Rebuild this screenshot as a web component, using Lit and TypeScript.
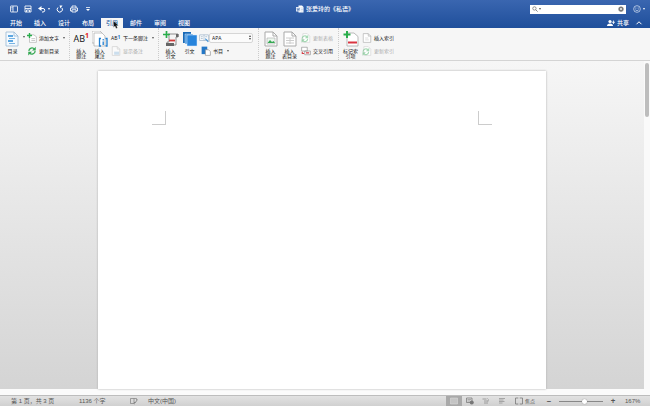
import { LitElement, html, css, svg, nothing } from "lit";
import { customElement, property, state } from "lit/decorators.js";
import { classMap } from "lit/directives/class-map.js";

const paper = svg`<path d="M2 1h8l4 4v10H2z" fill="#fff" stroke="#a9a9a9"/><path d="M10 1v4h4" fill="none" stroke="#a9a9a9"/>`;
const cycle = (c: string) => svg`<path d="M3 8a5 5 0 0 1 9-3M13 8a5 5 0 0 1-9 3" fill="none" stroke=${c} stroke-width="2"/><path d="M14 1v6H8zM2 15V9h6z" fill=${c}/>`;

const icons: Record<string, unknown> = {
  layout: svg`<rect x="1" y="2" width="14" height="12" rx="1" fill="none" stroke="#fff" stroke-width="1.6"/><path d="M6 2v12M3 5h2M3 8h2" stroke="#fff" stroke-width="1.6"/>`,
  save: svg`<path d="M2 2h12v12H2zM2 7h12M5 14v-4h6v4" fill="none" stroke="#fff" stroke-width="1.700"/>`,
  undo: svg`<path d="M3 7h7a3.500 3.500 0 0 1 0 7H8" fill="none" stroke="#fff" stroke-width="2"/><path d="M7 2L0 7l7 5z" fill="#fff"/>`,
  redo: svg`<path d="M4 5a5.300 5.300 0 1 0 8 1" fill="none" stroke="#fff" stroke-width="2"/><path d="M7 1h6L9 7z" fill="#fff"/>`,
  print: svg`<path d="M4 6V2h8v4M4 12H1V6h14v6h-3M4 9.500h8V14H4z" fill="none" stroke="#fff" stroke-width="1.700"/>`,
  more: svg`<path d="M4 5h8" stroke="#fff" stroke-width="1.500"/><path d="M4 8h8l-4 4z" fill="#fff"/>`,
  word: svg`<path d="M5 1h7l3 3v11H5z" fill="#fff"/><path d="M0 4h9v9H0z" fill="#dfe8f6"/><path d="M2 6l1.200 5L4.500 7l1.300 4L7 6" fill="none" stroke="#2b579a"/><path d="M10 6h4M10 9h4M10 12h4" stroke="#9db4d8"/>`,
  search: svg`<circle cx="6.500" cy="6.500" r="4.500" fill="none" stroke="#555" stroke-width="1.600"/><path d="M10 10l5 5" stroke="#555" stroke-width="1.800"/>`,
  clear: svg`<circle cx="8" cy="8" r="7" fill="#777"/><path d="M5 5l6 6M11 5l-6 6" stroke="#fff" stroke-width="1.800"/>`,
  smile: svg`<circle cx="8" cy="8" r="6.700" fill="none" stroke="#dce6f5" stroke-width="1.400"/><path d="M4.500 9.500q3.500 4 7 0" fill="none" stroke="#dce6f5" stroke-width="1.300"/><circle cx="5.700" cy="6" r="1.100" fill="#dce6f5"/><circle cx="10.300" cy="6" r="1.100" fill="#dce6f5"/>`,
  share: svg`<circle cx="6" cy="5" r="3.200" fill="#fff"/><path d="M0 14q0-5 6-5t6 5z" fill="#fff"/><path d="M13 3v7M9.500 6.500h6.500" stroke="#fff" stroke-width="1.600"/>`,
  chevron: svg`<path d="M3 10.500l5-5 5 5" fill="none" stroke="#fff" stroke-width="2"/>`,
  toc: svg`<path d="M2 1h8l4 4v10H2z" fill="#f3f9fe" stroke="#9ab9d4" stroke-width=".8"/><path d="M4 5h5M4 10h5" stroke="#2b8ad8" stroke-width="1.500"/><path d="M5 7.500h6M5 12.500h6" stroke="#78b4e4"/><path d="M10 1v4h4" fill="none" stroke="#9ab9d4" stroke-width=".8"/>`,
  addText: svg`<path d="M4 3h7l4 3v9H4z" fill="#fff" stroke="#aaa"/><path d="M7 9h6M7 12h6" stroke="#aaa"/><path d="M4 0v8M0 4h8" stroke="#29ad4b" stroke-width="2.200"/>`,
  update: cycle("#35a853"),
  updateOff: svg`<path d="M3 1h7l4 4v10H3z" fill="#fff" stroke="#d2d2d2"/><g opacity=".5" transform="translate(-1 2) scale(.9)">${cycle("#4fb56b")}</g>`,
  endnote: svg`<path d="M0 0h8l2 2v10H0z" fill="#fff" stroke="#aaa" stroke-width=".7"/><path d="M2 2h8l3 3v10H2z" fill="#fff" stroke="#aaa" stroke-width=".7"/><path d="M9 7.500H7.500V15H9M13.500 7.500H15V15h-1.500M11.200 10.500V14" fill="none" stroke="#2380d2" stroke-width="1.300"/><circle cx="11.200" cy="8.800" r=".8" fill="#2380d2"/>`,
  showNotes: svg`<g opacity=".55">${paper}<path d="M5 9h8v5H5z" fill="#a9cbe7"/></g>`,
  insertCitation: svg`<path d="M5 3h10v3h-2v8H4v-3h2V5z" fill="#f4f4f4" stroke="#777" stroke-width=".8"/><path d="M3 12h8v3H3z" fill="#666"/><path d="M13 3h2.500v3H13z" fill="#666"/><path d="M6 9.500h6" stroke="#d23a3a" stroke-width="1.800"/><path d="M3.500 0v7M0 3.500h7" stroke="#29ad4b" stroke-width="1.700"/>`,
  books: svg`<path d="M1 1h8v11H1z" fill="#1769b8"/><path d="M3 3h8v10H3z" fill="#4595dd" stroke="#fff" stroke-width=".4"/><path d="M5 4h10v11H5z" fill="#2784dc" stroke="#d8ebfc" stroke-width=".5"/>`,
  style: svg`<path d="M1 3h14v9H1zM8 3v9" fill="#fff" stroke="#8fa9c2"/><path d="M3 6h3M3 9h3M10 6h3" stroke="#7f9cb6"/><path d="M10 9l5 5" stroke="#4b97d7" stroke-width="2"/>`,
  bib: svg`<path d="M1 1h9v12H1z" fill="#2377c7"/><path d="M7 6h5l3 3v6H7z" fill="#fff" stroke="#888"/>`,
  caption: svg`${paper}<path d="M4 7h8v6H4z" fill="#edf7ef" stroke="#aaa" stroke-width=".6"/><path d="M4.500 12l2.500-3 2 2 1.500-1 1.500 2z" fill="#35a853"/>`,
  tableFig: svg`${paper}<path d="M4 7h8M4 9.500h8M4 12h8M8 7v6" stroke="#ccc"/>`,
  crossRef: svg`<path d="M1 2h9v6H1zM6 8h9v6H6z" fill="#fff" stroke="#888"/><path d="M2 9v3h3M8 11h5" fill="none" stroke="#d33d46" stroke-width="1.700"/>`,
  markEntry: svg`<path d="M4 2h7l4 3.500V15H4z" fill="#fff" stroke="#aaa" stroke-width=".8"/><path d="M5 11.500h9" stroke="#d93440" stroke-width="2"/><path d="M4 0v7M.5 3.500h7" stroke="#29ad4b" stroke-width="2"/>`,
  index: svg`${paper}<path d="M5 8h5M5 11h6" stroke="#ccc"/>`,
  proof: svg`<path d="M8 3H1v10h7l2 1M8 3v10M8 3h5v3" fill="none" stroke="#777" stroke-width="1.300"/><path d="M8 10l2 2 5-7" fill="none" stroke="#777" stroke-width="1.600"/>`,
  printView: svg`<path d="M1 2h14v12H1z" fill="#c4c4c4" stroke="#dedede"/>`,
  webView: svg`<path d="M1 2h11v9H1z" fill="none" stroke="#777" stroke-width="1.500"/><path d="M3 5h7M3 8h5" stroke="#777"/><circle cx="11.500" cy="11" r="4" fill="#777"/>`,
  outline: svg`<path d="M1 4h8M4 8h9M4 12h8" stroke="#888" stroke-width="1.500"/><path d="M10 2l4 4-4 3" fill="none" stroke="#999"/>`,
  draft: svg`<path d="M2 3h12M2 6h9M2 9h11M2 12h7" stroke="#888" stroke-width="1.300"/>`,
  focus: svg`<path d="M6 2H1v12h5M10 2h5v12h-5" fill="none" stroke="#777" stroke-width="1.600"/><path d="M6 2h4M6 14h4" stroke="#aaa"/>`,
};

const icon = (name: string, size = "s") =>
  html`<svg class="icon ${size}" viewBox="0 0 16 16" aria-hidden="true">${icons[name]}</svg>`;
const caret = html`<span class="caret"></span>`;

interface Command { icon: string; label: string; menu?: boolean; off?: boolean }

@customElement("ribbon-bar")
class RibbonBar extends LitElement {
  static styles = css`
    :host { display: flex; height: 32px; background: #f6f6f6; border-bottom: 1px solid #d4d4d4; overflow: hidden; }
    .group { display: flex; flex: none; align-items: flex-start; padding: 3px 4px 0 2px; border-left: 1px dotted #ccc; box-sizing: border-box; }
    .g1 { width: 69px; border-left: 0; padding-left: 4px; }
    .g2 { width: 89px; }
    .g3 { width: 100px; }
    .g4 { width: 80px; }
    button { border: 0; background: none; padding: 0; margin: 0; font: inherit; color: #111; white-space: nowrap; }
    .big { display: flex; flex-direction: column; align-items: center; width: 19px; line-height: 5px; text-align: center; }
    .label { display: flex; flex-direction: column; height: 11px; margin-top: 2px; }
    .col { display: flex; flex-direction: column; gap: 3px; margin-left: 2px; padding-top: 2px; }
    .row { display: flex; align-items: center; gap: 2px; height: 10px; }
    .tight { gap: 0; margin-left: -2px; }
    .off { color: #aaa; }
    .icon { display: block; flex: none; }
    .s { width: 10px; height: 10px; }
    .l { width: 16px; height: 16px; }
    .caret { border: 1px solid transparent; border-top: 2px solid #555; border-bottom: 0; margin-left: 2px; }
    .open { padding-top: 7px; width: 4px; }
    .ab { display: flex; height: 16px; align-items: center; font: 9px/16px "Open Sans", sans-serif; }
    .ab sup { font-size: 7px; line-height: 10px; align-self: flex-start; color: #e01b24; font-weight: 700; }
    .mini { display: flex; width: 10px; font: 5px/10px "Open Sans", sans-serif; }
    .mini sup { font-size: 5px; line-height: 8px; color: #1976c9; font-weight: 700; }
    .pick { position: relative; display: flex; }
    select { appearance: none; width: 44px; height: 10px; padding: 0 2px; border: 1px solid #d6d6d6; border-radius: 2px; background: #fbfbfb; color: #111; font: 5px/8px "Open Sans", sans-serif; }
    .arrows { position: absolute; right: 2px; top: 2px; display: grid; gap: 1px; }
    .arrows::before { content: ""; border: 1px solid transparent; border-bottom: 2px solid #444; border-top: 0; }
    .arrows::after { content: ""; border: 1px solid transparent; border-top: 2px solid #444; border-bottom: 0; }
  `;

  big(name: string, lines: string[]) {
    const art = name === "ab" ? html`<span class="ab">AB<sup>1</sup></span>` : icon(name, "l");
    return html`<button class="big">${art}<span class="label">${lines.map((t) => html`<span>${t}</span>`)}</span></button>`;
  }

  row(c: Command) {
    const art = c.icon === "ab" ? html`<span class="mini">AB<sup>1</sup></span>` : icon(c.icon);
    return html`<button class=${classMap({ row: true, off: !!c.off })} ?disabled=${c.off}>${art}<span>${c.label}</span>${c.menu ? caret : nothing}</button>`;
  }

  render() {
    return html`
      <div class="group g1">
        ${this.big("toc", ["目录"])}
        <button class="open" aria-label="目录"><span class="caret"></span></button>
        <div class="col">
          ${this.row({ icon: "addText", label: "添加文字", menu: true })}
          ${this.row({ icon: "update", label: "更新目录" })}
        </div>
      </div>
      <div class="group g2">
        ${this.big("ab", ["插入", "脚注"])} ${this.big("endnote", ["插入", "尾注"])}
        <div class="col">
          ${this.row({ icon: "ab", label: "下一条脚注", menu: true })}
          ${this.row({ icon: "showNotes", label: "显示备注", off: true })}
        </div>
      </div>
      <div class="group g3">
        ${this.big("insertCitation", ["插入", "引文"])} ${this.big("books", ["引文"])}
        <div class="col">
          <label class="row tight">${icon("style")}<span class="pick"><select aria-label="APA"><option>APA</option></select><span class="arrows"></span></span></label>
          ${this.row({ icon: "bib", label: "书目", menu: true })}
        </div>
      </div>
      <div class="group g4">
        ${this.big("caption", ["插入", "题注"])} ${this.big("tableFig", ["插入", "表目录"])}
        <div class="col">
          ${this.row({ icon: "updateOff", label: "更新表格", off: true })}
          ${this.row({ icon: "crossRef", label: "交叉引用" })}
        </div>
      </div>
      <div class="group">
        ${this.big("markEntry", ["标记索", "引项"])}
        <div class="col">
          ${this.row({ icon: "index", label: "插入索引" })}
          ${this.row({ icon: "updateOff", label: "更新索引", off: true })}
        </div>
      </div>`;
  }
}

@customElement("status-bar")
class StatusBar extends LitElement {
  static styles = css`
    :host { display: flex; align-items: center; height: 11px; padding: 0 11px; background: linear-gradient(#e2e2e2, #d0d0d0); border-top: 1px solid #bdbdbd; color: #555; box-sizing: border-box; font-size: 6px; line-height: 10px; white-space: nowrap; }
    button { display: flex; align-items: center; justify-content: center; gap: 2px; border: 0; background: none; padding: 0; font: inherit; color: inherit; }
    .pages { width: 68px; }
    .words { width: 51px; }
    .lang { margin-left: 10px; }
    .views { display: flex; margin-left: auto; }
    .view { width: 16px; height: 10px; }
    .on { background: #a9a9a9; }
    .focus { margin-left: 5px; font-size: 5px; }
    .icon { width: 8px; height: 8px; flex: none; }
    .zoom { display: flex; align-items: center; margin-left: 10px; }
    .step { width: 8px; font: 700 8px/8px "Open Sans", sans-serif; color: #555; }
    input { appearance: none; width: 44px; height: 1px; margin: 0 6px; background: #888; }
    input::-webkit-slider-thumb { appearance: none; width: 5px; height: 5px; border-radius: 50%; background: #fff; box-shadow: 0 0 1px #666; }
    output { margin-left: 8px; width: 14px; text-align: right; }
  `;

  @state() zoom = 167;

  render() {
    return html`
      <span class="pages">第 1 页，共 3 页</span>
      <span class="words">1136 个字</span>
      <button aria-label="校对">${icon("proof")}</button>
      <span class="lang">中文(中国)</span>
      <div class="views">
        ${["printView", "webView", "outline", "draft"].map((v, i) => html`<button class=${classMap({ view: true, on: i === 0 })} aria-label=${v}>${icon(v)}</button>`)}
      </div>
      <button class="focus">${icon("focus")}焦点</button>
      <div class="zoom">
        <button class="step">−</button>
        <input type="range" min="10" max="280" .value=${String(this.zoom)} aria-label="Zoom" @input=${(e: Event) => (this.zoom = +(e.target as HTMLInputElement).value)} />
        <button class="step">+</button>
        <output>${this.zoom}%</output>
      </div>`;
  }
}

@customElement("app-root")
class AppRoot extends LitElement {
  static styles = css`
    :host { display: flex; flex-direction: column; height: 100vh; overflow: hidden; background: #fbfbfb; font: 5px/7px "Liberation Sans", "Noto Sans CJK SC", sans-serif; }
    .head { background: linear-gradient(#3a66b0, #1f4f9b); color: #fff; font-size: 6px; line-height: 10px; }
    .title { display: grid; grid-template-columns: 1fr auto 1fr; align-items: center; height: 18px; }
    button { display: flex; align-items: center; gap: 2px; border: 0; padding: 0; margin: 0; background: none; color: inherit; font: inherit; white-space: nowrap; }
    .quick { display: flex; align-items: center; gap: 6px; padding-left: 10px; }
    .name { display: flex; align-items: center; gap: 2px; margin: 0; font: inherit; font-weight: 500; }
    .icon { width: 8px; height: 8px; flex: none; display: block; }
    .caret { border: 1px solid transparent; border-top: 2px solid currentColor; border-bottom: 0; }
    .tools { display: flex; justify-content: flex-end; align-items: center; gap: 7px; padding-right: 5px; }
    .search { display: flex; align-items: center; gap: 1px; width: 96px; height: 9px; box-sizing: border-box; padding: 0 2px; background: #fff; color: #555; }
    .search .icon { width: 6px; height: 6px; }
    .search input { flex: 1; min-width: 0; height: 7px; border: 0; padding: 0; font: inherit; outline: 0; }
    .nav { display: flex; justify-content: space-between; height: 10px; padding: 0 7px 0 5px; }
    .tabs { display: flex; gap: 2px; }
    .tab { width: 22px; justify-content: center; position: relative; font-weight: 500; }
    .active { background: #f6f6f6; color: #2456a0; }
    .pointer { position: absolute; left: 12px; top: 3px; width: 6px; height: 8px; }
    .end { display: flex; gap: 6px; font-weight: 500; }
    .work { display: flex; flex: 1; min-height: 0; margin-bottom: 6px; }
    .canvas { flex: 1; display: flex; justify-content: center; padding-top: 10px; background: linear-gradient(#f6f6f6, #ececec 30%, #d4d4d4); }
    .page { display: flex; justify-content: space-between; align-items: flex-start; width: 70%; max-width: 448px; box-sizing: border-box; padding: 40px 54px; background: #fff; box-shadow: 0 0 2px #aaa; }
    .mark { width: 14px; height: 14px; box-sizing: border-box; border: 0 solid #ccc; border-bottom-width: 1px; }
    .left { border-right-width: 1px; }
    .right { border-left-width: 1px; }
    .scroll { width: 6px; box-sizing: border-box; padding: 2px 1px; background: #fafafa; }
    .thumb { height: 54px; border-radius: 2px; background: #bdbdbd; }
  `;

  @property() active = "引用";

  render() {
    return html`
      <header class="head">
        <div class="title">
          <div class="quick">
            <button aria-label="layout">${icon("layout")}</button>
            <button aria-label="save">${icon("save")}</button>
            <button aria-label="undo">${icon("undo")}${caret}</button>
            <button aria-label="redo">${icon("redo")}</button>
            <button aria-label="print">${icon("print")}</button>
            <button aria-label="more">${icon("more")}</button>
          </div>
          <h1 class="name">${icon("word")}张爱玲的《私语》</h1>
          <div class="tools">
            <label class="search">${icon("search")}${caret}<input type="text" aria-label="搜索" />${icon("clear")}</label>
            <button aria-label="feedback">${icon("smile")}${caret}</button>
          </div>
        </div>
        <nav class="nav">
          <div class="tabs">
            ${["开始", "插入", "设计", "布局", "引用", "邮件", "审阅", "视图"].map((t) => html`
              <button class=${classMap({ tab: true, active: t === this.active })} @click=${() => (this.active = t)}>${t}${t === this.active
                ? html`<svg class="pointer" viewBox="0 0 12 16"><path d="M1 0v13l3-3 2 5 3-1-2-5h4z" fill="#111" stroke="#fff" stroke-width=".6"/></svg>`
                : nothing}</button>`)}
          </div>
          <div class="end">
            <button>${icon("share")}共享</button>
            <button aria-label="collapse">${icon("chevron")}</button>
          </div>
        </nav>
      </header>
      <ribbon-bar></ribbon-bar>
      <main class="work">
        <div class="canvas"><article class="page"><span class="mark left"></span><span class="mark right"></span></article></div>
        <div class="scroll"><div class="thumb"></div></div>
      </main>
      <status-bar></status-bar>`;
  }
}
